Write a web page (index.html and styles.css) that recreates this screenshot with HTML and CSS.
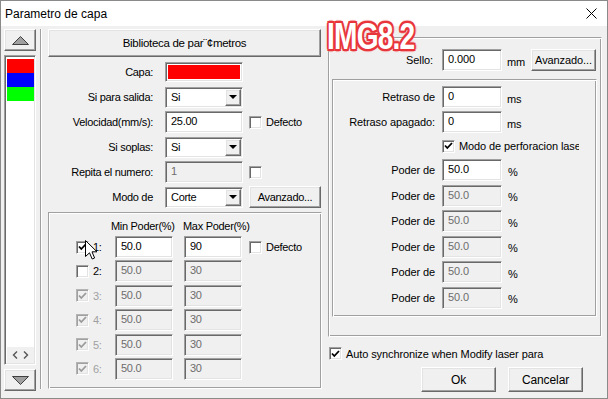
FILE: index.html
```html
<!DOCTYPE html>
<html>
<head>
<meta charset="utf-8">
<title>Parametro de capa</title>
<link rel="stylesheet" href="styles.css">
</head>
<body>
<div class="window">
  <div class="titlebar">
    <span class="title">Parametro de capa</span>
    <svg class="close" width="11" height="11" viewBox="0 0 11 11"><path d="M0.5 0.5 L10.5 10.5 M10.5 0.5 L0.5 10.5" stroke="#000" stroke-width="1" fill="none"/></svg>
  </div>
  <div class="body">
    <div class="layers">
      <div class="raised arrow-btn"><svg width="17" height="9" viewBox="0 0 17 9"><polygon points="0.5,8.5 8.5,0.5 16.5,8.5" fill="#a0a0a0" stroke="#404040"/></svg></div>
      <div class="sunken listbox">
        <div class="items">
          <div class="item red"></div>
          <div class="item blue"></div>
          <div class="item green"></div>
        </div>
        <div class="hscroll">
          <svg width="6" height="8" viewBox="0 0 6 8"><path d="M5 0.5 L1.5 4 L5 7.5" stroke="#555" stroke-width="1.4" fill="none"/></svg>
          <svg width="6" height="8" viewBox="0 0 6 8"><path d="M1 0.5 L4.5 4 L1 7.5" stroke="#555" stroke-width="1.4" fill="none"/></svg>
        </div>
      </div>
      <div class="raised arrow-btn"><svg width="17" height="9" viewBox="0 0 17 9"><polygon points="0.5,0.5 8.5,8.5 16.5,0.5" fill="#a0a0a0" stroke="#404040"/></svg></div>
    </div>
    <div class="vsep"></div>

    <div class="main">
      <div class="raised btn lib-btn">Biblioteca de par¨¢metros</div>
      <div class="form">
        <div class="lbl">Capa:</div>
        <div class="sunken swatch"><div class="swatch-fill"></div></div>
        <div></div>

        <div class="lbl">Si para salida:</div>
        <div class="sunken combo"><span class="val">Si</span><span class="raised dd"><i class="tri"></i></span></div>
        <div></div>

        <div class="lbl">Velocidad(mm/s):</div>
        <div class="sunken field">25.00</div>
        <div class="chk-line"><span class="sunken cb"></span><span class="cb-text">Defecto</span></div>

        <div class="lbl">Si soplas:</div>
        <div class="sunken combo"><span class="val">Si</span><span class="raised dd"><i class="tri"></i></span></div>
        <div></div>

        <div class="lbl">Repita el numero:</div>
        <div class="sunken field disabled">1</div>
        <div class="chk-line"><span class="sunken cb"></span></div>

        <div class="lbl">Modo de</div>
        <div class="sunken combo"><span class="val">Corte</span><span class="raised dd"><i class="tri"></i></span></div>
        <div><div class="raised btn adv-btn">Avanzado...</div></div>
      </div>

      <div class="etched power">
        <div class="power-head"><span class="h-min">Min Poder(%)</span><span class="h-max">Max Poder(%)</span></div>
        <div class="power-rows">
          <span class="sunken cb"><svg class="tick" width="9" height="8" viewBox="0 0 9 8"><path d="M1 3.5 L3.3 6 L8 1" stroke="#000" stroke-width="1.8" fill="none"/></svg></span>
          <span class="num">1:</span>
          <div><div class="sunken field pw">50.0</div></div>
          <div><div class="sunken field pw">90</div></div>
          <div class="chk-line"><span class="sunken cb"></span><span class="cb-text">Defecto</span></div>

          <span class="sunken cb"></span>
          <span class="num">2:</span>
          <div><div class="sunken field pw disabled">50.0</div></div>
          <div><div class="sunken field pw disabled">30</div></div>
          <div></div>

          <span class="sunken cb off"><svg class="tick" width="9" height="8" viewBox="0 0 9 8"><path d="M1 3.5 L3.3 6 L8 1" stroke="#9a9a9a" stroke-width="1.8" fill="none"/></svg></span>
          <span class="num off">3:</span>
          <div><div class="sunken field pw disabled">50.0</div></div>
          <div><div class="sunken field pw disabled">30</div></div>
          <div></div>

          <span class="sunken cb off"><svg class="tick" width="9" height="8" viewBox="0 0 9 8"><path d="M1 3.5 L3.3 6 L8 1" stroke="#9a9a9a" stroke-width="1.8" fill="none"/></svg></span>
          <span class="num off">4:</span>
          <div><div class="sunken field pw disabled">50.0</div></div>
          <div><div class="sunken field pw disabled">30</div></div>
          <div></div>

          <span class="sunken cb off"><svg class="tick" width="9" height="8" viewBox="0 0 9 8"><path d="M1 3.5 L3.3 6 L8 1" stroke="#9a9a9a" stroke-width="1.8" fill="none"/></svg></span>
          <span class="num off">5:</span>
          <div><div class="sunken field pw disabled">50.0</div></div>
          <div><div class="sunken field pw disabled">30</div></div>
          <div></div>

          <span class="sunken cb off"><svg class="tick" width="9" height="8" viewBox="0 0 9 8"><path d="M1 3.5 L3.3 6 L8 1" stroke="#9a9a9a" stroke-width="1.8" fill="none"/></svg></span>
          <span class="num off">6:</span>
          <div><div class="sunken field pw disabled">50.0</div></div>
          <div><div class="sunken field pw disabled">30</div></div>
          <div></div>
        </div>
      </div>
    </div>

    <div class="side">
      <div class="etched outer">
        <div class="sello-row">
          <span class="s-lbl">Sello:</span>
          <div class="sunken field s-in">0.000</div>
          <span class="s-unit">mm</span>
          <div class="raised btn s-adv">Avanzado...</div>
        </div>
        <div class="etched inner">
          <div class="prow"><span class="p-lbl">Retraso de</span><div class="sunken field s-in">0</div><span class="p-unit">ms</span></div>
          <div class="prow"><span class="p-lbl">Retraso apagado:</span><div class="sunken field s-in">0</div><span class="p-unit">ms</span></div>
          <div class="cbrow"><span class="sunken cb"><svg class="tick" width="9" height="8" viewBox="0 0 9 8"><path d="M1 3.5 L3.3 6 L8 1" stroke="#000" stroke-width="1.8" fill="none"/></svg></span><span class="clip">Modo de perforacion laser</span></div>
          <div class="prow first"><span class="p-lbl">Poder de</span><div class="sunken field s-in">50.0</div><span class="p-unit pct">%</span></div>
          <div class="prow next"><span class="p-lbl">Poder de</span><div class="sunken field s-in disabled">50.0</div><span class="p-unit pct">%</span></div>
          <div class="prow next"><span class="p-lbl">Poder de</span><div class="sunken field s-in disabled">50.0</div><span class="p-unit pct">%</span></div>
          <div class="prow next"><span class="p-lbl">Poder de</span><div class="sunken field s-in disabled">50.0</div><span class="p-unit pct">%</span></div>
          <div class="prow next"><span class="p-lbl">Poder de</span><div class="sunken field s-in disabled">50.0</div><span class="p-unit pct">%</span></div>
          <div class="prow next"><span class="p-lbl">Poder de</span><div class="sunken field s-in disabled">50.0</div><span class="p-unit pct">%</span></div>
        </div>
      </div>
      <div class="auto-row"><span class="sunken cb"><svg class="tick" width="9" height="8" viewBox="0 0 9 8"><path d="M1 3.5 L3.3 6 L8 1" stroke="#000" stroke-width="1.8" fill="none"/></svg></span><span class="cb-text">Auto synchronize when Modify laser para</span></div>
      <div class="buttons">
        <div class="raised btn dlg-btn">Ok</div>
        <div class="raised btn dlg-btn">Cancelar</div>
      </div>
    </div>
  </div>

  <div class="logo">IMG8.2</div>
  <svg class="cursor" width="13" height="20" viewBox="0 0 13 20"><path d="M0.5 0.5 L0.5 16.5 L4.5 12.8 L7.2 19 L9.6 18 L7 11.8 L12 11.8 Z" fill="#fff" stroke="#000" stroke-width="1" stroke-linejoin="miter"/></svg>
</div>
</body>
</html>
```
FILE: styles.css
```css
* { box-sizing: border-box; }

body {
  margin: 0;
  background: #fff;
  color: #000;
  font: 11px "Liberation Sans", Arial, sans-serif;
  letter-spacing: -0.3px;
}

.window {
  position: relative;
  width: 608px;
  height: 399px;
  border: 1px solid #8a8a8a;
  background: #f0f0f0;
  overflow: hidden;
}

.titlebar {
  height: 25px;
  background: #fff;
  display: flex;
  align-items: center;
  justify-content: space-between;
  padding: 0 10px 0 4px;
}

.title {
  font-size: 12px;
  letter-spacing: 0;
}

/* 3D styles */
.sunken {
  border: 1px solid;
  border-color: #a0a0a0 #fff #fff #a0a0a0;
  box-shadow: inset 1px 1px 0 #696969, inset -1px -1px 0 #e3e3e3;
  background: #fff;
}

.raised {
  border: 1px solid;
  border-color: #fff #696969 #696969 #fff;
  box-shadow: inset -1px -1px 0 #a0a0a0, inset 1px 1px 0 #e3e3e3;
  background: #f0f0f0;
}

.etched {
  border: 1px solid;
  border-color: #a0a0a0 #fff #fff #a0a0a0;
  box-shadow: inset 1px 1px 0 #fff, inset -1px -1px 0 #a0a0a0;
}

.btn {
  display: flex;
  align-items: center;
  justify-content: center;
  white-space: nowrap;
}

.body {
  display: flex;
  align-items: flex-start;
  padding: 3px 0 0 3px;
}

/* layer list */
.layers {
  width: 32px;
  display: flex;
  flex-direction: column;
  gap: 4px;
}

.arrow-btn {
  height: 22px;
  display: flex;
  align-items: center;
  justify-content: center;
}

.listbox {
  height: 310px;
  display: flex;
  flex-direction: column;
  padding: 2px 1px 1px 2px;
}

.items {
  flex: 1;
  padding-top: 1px;
}

.item { height: 14px; }
.item.red { background: #ff0000; }
.item.blue { background: #0000ff; }
.item.green { background: #00ff00; }

.hscroll {
  height: 16px;
  background: #f0f0f0;
  display: flex;
  align-items: center;
  justify-content: space-around;
  padding: 0 3px;
}

.vsep {
  width: 2px;
  height: 360px;
  margin-left: 4px;
  border-left: 1px solid #a0a0a0;
  border-right: 1px solid #fff;
}

/* main column */
.main {
  margin-left: 6px;
  width: 274px;
}

.lib-btn {
  width: 273px;
  height: 28px;
  font-size: 11.5px;
}

.form {
  margin-top: 4px;
  display: grid;
  grid-template-columns: 111px 78px auto;
  column-gap: 6px;
  grid-auto-rows: 22px;
  row-gap: 3px;
  align-items: center;
}

.lbl {
  text-align: right;
  padding-right: 6px;
  white-space: nowrap;
}

.swatch {
  height: 20px;
  padding: 2px;
}

.swatch-fill {
  height: 100%;
  background: #ff0000;
}

.combo {
  height: 21px;
  display: flex;
  align-items: stretch;
  padding: 1px;
}

.combo .val {
  flex: 1;
  display: flex;
  align-items: center;
  padding-left: 4px;
}

.dd {
  width: 16px;
  display: flex;
  align-items: center;
  justify-content: center;
}

.tri {
  width: 0;
  height: 0;
  border-left: 4px solid transparent;
  border-right: 4px solid transparent;
  border-top: 4px solid #000;
}

.field {
  height: 22px;
  padding: 3px 0 0 5px;
  line-height: 13px;
  white-space: nowrap;
}

.field.disabled {
  background: #f0f0f0;
  color: #6d6d6d;
}

.chk-line {
  display: flex;
  align-items: center;
}

.cb {
  width: 13px;
  height: 13px;
  display: flex;
  align-items: center;
  justify-content: center;
  flex: none;
}

.cb.off {
  background: #f0f0f0;
  border-color: #b4b4b4 #fff #fff #b4b4b4;
  box-shadow: inset 1px 1px 0 #a0a0a0, inset -1px -1px 0 #e3e3e3;
}

.cb-text {
  margin-left: 4px;
  white-space: nowrap;
}

.adv-btn {
  width: 72px;
  height: 22px;
}

/* power group */
.power {
  margin-top: 4px;
  width: 274px;
  height: 177px;
  padding: 6px 0 0 27px;
}

.power-head {
  height: 14px;
  line-height: 14px;
  display: flex;
  white-space: nowrap;
}

.h-min {
  margin-left: 35px;
  width: 72px;
}

.power-rows {
  margin-top: 3px;
  display: grid;
  grid-template-columns: 13px 26px 69px 65px auto;
  grid-auto-rows: 22px;
  row-gap: 2.4px;
  align-items: center;
}

.num { padding-left: 4px; }
.num.off { color: #a0a0a0; }

.pw { width: 58px; }

/* side column */
.side {
  margin-left: 6px;
  width: 274px;
  letter-spacing: -0.1px;
}

.outer {
  margin-top: 8px;
  height: 300px;
  width: 274px;
  padding-top: 11px;
}

.sello-row {
  height: 22px;
  display: flex;
  align-items: center;
}

.s-lbl {
  width: 104px;
  text-align: right;
}

.s-in {
  width: 60px;
  margin-left: 9px;
}

.s-unit {
  width: 24px;
  margin-left: 5px;
  padding-top: 4px;
}

.s-adv {
  width: 65px;
  height: 22px;
}

.inner {
  margin: 8px 0 0 3px;
  width: 265px;
  height: 238px;
  padding-top: 6px;
}

.prow {
  height: 22px;
  display: flex;
  align-items: center;
  margin-top: 3px;
}

.prow:first-child { margin-top: 0; }
.prow.first { margin-top: 3px; }
.prow.next { margin-top: 3.5px; }

.p-lbl {
  width: 102px;
  text-align: right;
  white-space: nowrap;
}

.prow .s-in { margin-left: 7px; }

.p-unit {
  margin-left: 5px;
  padding-top: 3px;
}

.p-unit.pct { margin-left: 6px; }

.cbrow {
  height: 20px;
  margin-top: 3px;
  display: flex;
  align-items: center;
  padding-left: 109px;
}

.clip {
  margin-left: 4px;
  width: 120px;
  overflow: hidden;
  white-space: nowrap;
}

.auto-row {
  margin-top: 10px;
  height: 13px;
  display: flex;
  align-items: center;
  padding-left: 1px;
}

.buttons {
  margin-top: 7px;
  display: flex;
  gap: 12px;
  padding-left: 93px;
}

.dlg-btn {
  width: 75px;
  height: 25px;
  font-size: 12px;
}

/* overlays */
.logo {
  position: absolute;
  left: 326px;
  top: 16px;
  font: bold 36px "Liberation Sans", Arial, sans-serif;
  line-height: 40px;
  letter-spacing: -1px;
  color: #fff;
  transform: scaleX(0.78);
  transform-origin: left top;
  text-shadow:
    2px 0 0 #e8353b, -2px 0 0 #e8353b, 0 2px 0 #e8353b, 0 -2px 0 #e8353b,
    2px 2px 0 #e8353b, -2px -2px 0 #e8353b, 2px -2px 0 #e8353b, -2px 2px 0 #e8353b,
    3px 0 1px #f3a0a2, -3px 0 1px #f3a0a2, 0 3px 1px #f3a0a2, 0 -3px 1px #f3a0a2;
}

.cursor {
  position: absolute;
  left: 84px;
  top: 239px;
}
```
